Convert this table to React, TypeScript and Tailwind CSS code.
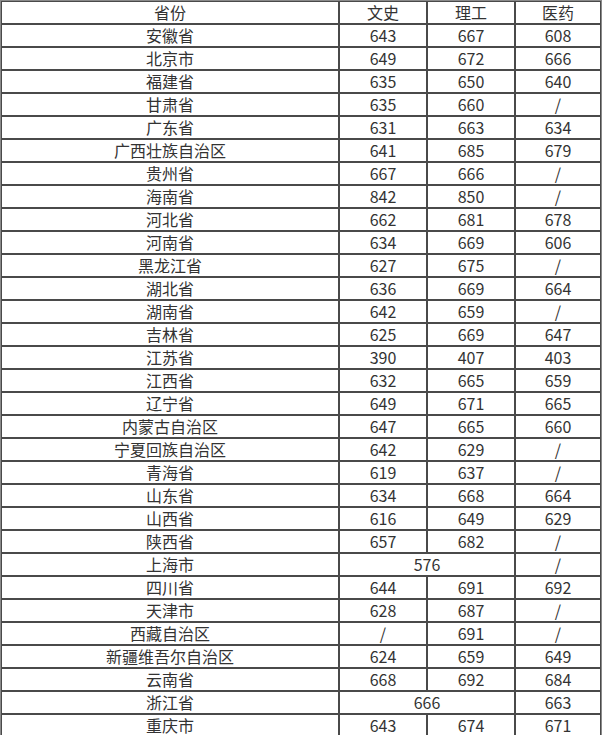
import React from 'react';

type Row = { name: string; cells: (string | { span: string })[] };

const rows: Row[] = [
    { name: '安徽省', cells: ['643', '667', '608'] },
    { name: '北京市', cells: ['649', '672', '666'] },
    { name: '福建省', cells: ['635', '650', '640'] },
    { name: '甘肃省', cells: ['635', '660', '/'] },
    { name: '广东省', cells: ['631', '663', '634'] },
    { name: '广西壮族自治区', cells: ['641', '685', '679'] },
    { name: '贵州省', cells: ['667', '666', '/'] },
    { name: '海南省', cells: ['842', '850', '/'] },
    { name: '河北省', cells: ['662', '681', '678'] },
    { name: '河南省', cells: ['634', '669', '606'] },
    { name: '黑龙江省', cells: ['627', '675', '/'] },
    { name: '湖北省', cells: ['636', '669', '664'] },
    { name: '湖南省', cells: ['642', '659', '/'] },
    { name: '吉林省', cells: ['625', '669', '647'] },
    { name: '江苏省', cells: ['390', '407', '403'] },
    { name: '江西省', cells: ['632', '665', '659'] },
    { name: '辽宁省', cells: ['649', '671', '665'] },
    { name: '内蒙古自治区', cells: ['647', '665', '660'] },
    { name: '宁夏回族自治区', cells: ['642', '629', '/'] },
    { name: '青海省', cells: ['619', '637', '/'] },
    { name: '山东省', cells: ['634', '668', '664'] },
    { name: '山西省', cells: ['616', '649', '629'] },
    { name: '陕西省', cells: ['657', '682', '/'] },
    { name: '上海市', cells: [{ span: '576' }, '/'] },
    { name: '四川省', cells: ['644', '691', '692'] },
    { name: '天津市', cells: ['628', '687', '/'] },
    { name: '西藏自治区', cells: ['/', '691', '/'] },
    { name: '新疆维吾尔自治区', cells: ['624', '659', '649'] },
    { name: '云南省', cells: ['668', '692', '684'] },
    { name: '浙江省', cells: [{ span: '666' }, '663'] },
    { name: '重庆市', cells: ['643', '674', '671'] },
];

const cell = 'border border-[#4a4a4a] p-0 h-[23px] leading-[21px] text-center align-middle';

export default function App() {
    return (
        <div className="w-[602px] h-[735px] overflow-hidden bg-white text-[#333] text-[16px] font-['Noto_Sans_CJK_SC','Noto_Sans',sans-serif]">
            <table className="w-[602px] table-fixed border-separate border-spacing-0 border border-[#8a8a8a]">
                <colgroup>
                    <col className="w-[338px]" />
                    <col className="w-[88px]" />
                    <col className="w-[88px]" />
                    <col className="w-[86px]" />
                </colgroup>
                <tbody>
                    <tr>
                        <td className={cell}>省份</td>
                        <td className={cell}>文史</td>
                        <td className={cell}>理工</td>
                        <td className={cell}>医药</td>
                    </tr>
                    {rows.map((r) => (
                        <tr key={r.name}>
                            <td className={cell}>{r.name}</td>
                            {r.cells.map((c, i) =>
                                typeof c === 'string' ? (
                                    <td key={i} className={cell}>{c}</td>
                                ) : (
                                    <td key={i} colSpan={2} className={cell}>{c.span}</td>
                                )
                            )}
                        </tr>
                    ))}
                </tbody>
            </table>
        </div>
    );
}
